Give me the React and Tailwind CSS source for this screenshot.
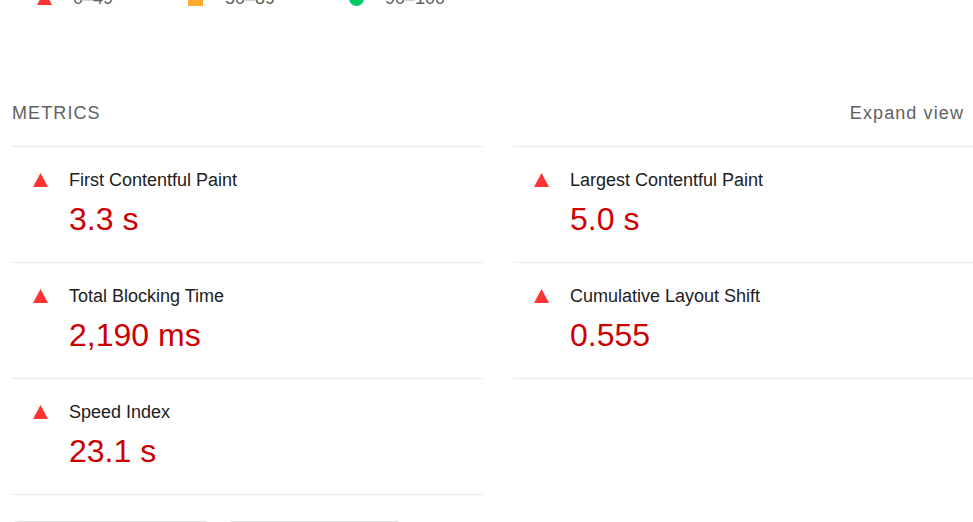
import React from 'react';

const metricsLeft = [
  { label: 'First Contentful Paint', value: '3.3 s' },
  { label: 'Total Blocking Time', value: '2,190 ms' },
  { label: 'Speed Index', value: '23.1 s' },
];

const metricsRight = [
  { label: 'Largest Contentful Paint', value: '5.0 s' },
  { label: 'Cumulative Layout Shift', value: '0.555' },
];

const FailIcon = () => (
  <svg width="15" height="14" viewBox="0 0 15 14" className="shrink-0">
    <polygon points="7.5,0 15,14 0,14" fill="#ff3333" />
  </svg>
);

const Metric = ({ label, value, last }) => (
  <div className={`border-t border-[#ebebeb] pl-[21px] pt-[21px] pb-[23px] ${last ? 'border-b' : ''}`}>
    <div className="flex items-center gap-[21px] h-[24px]">
      <FailIcon />
      <span className="text-[18px] leading-[24px] text-[#212121]">{label}</span>
    </div>
    <div className="pl-[36px] mt-[7px] text-[32px] leading-[40px] text-[#cc0000]">{value}</div>
  </div>
);

export default function App() {
  return (
    <div
      className="h-[522px] overflow-hidden bg-white pl-3"
      style={{ fontFamily: '"Liberation Sans", Arial, sans-serif' }}
    >
      {/* Legend */}
      <div className="-mt-[14px] flex items-center h-[24px] text-[18px] leading-[24px] text-[#616161]">
        <div className="flex items-center w-[176px] pl-[25px]">
          <svg width="15" height="14" viewBox="0 0 15 14" className="shrink-0">
            <polygon points="7.5,0 15,14 0,14" fill="#ff3333" />
          </svg>
          <span className="ml-[21px]">0–49</span>
        </div>
        <div className="flex items-center w-[161px]">
          <span className="w-[15px] h-[15px] bg-[#ffaa33] shrink-0" />
          <span className="ml-[22px]">50–89</span>
        </div>
        <div className="flex items-center">
          <span className="w-[15px] h-[15px] rounded-full bg-[#00cc66] shrink-0" />
          <span className="ml-[21px]">90–100</span>
        </div>
      </div>

      {/* Metrics header */}
      <div className="mt-[91px] flex items-center justify-between h-[24px] pr-[9px] text-[18px] leading-[24px] text-[#616161] tracking-[1.1px]">
        <span>METRICS</span>
        <span>Expand view</span>
      </div>

      <div className="mt-[21px] grid grid-cols-[471px_1fr] gap-x-[30px] items-start">
        <div className="flex flex-col">
          {metricsLeft.map((m, i) => (
            <Metric key={m.label} {...m} last={i === metricsLeft.length - 1} />
          ))}
        </div>
        <div className="flex flex-col">
          {metricsRight.map((m, i) => (
            <Metric key={m.label} {...m} last={i === metricsRight.length - 1} />
          ))}
        </div>
      </div>

      {/* Buttons */}
      <div className="mt-[26px] flex gap-4">
        <div className="w-[199px] h-[40px] rounded-[6px] border border-[#e0e0e0]" />
        <div className="w-[175px] h-[40px] rounded-[6px] border border-[#e0e0e0]" />
      </div>
    </div>
  );
}
